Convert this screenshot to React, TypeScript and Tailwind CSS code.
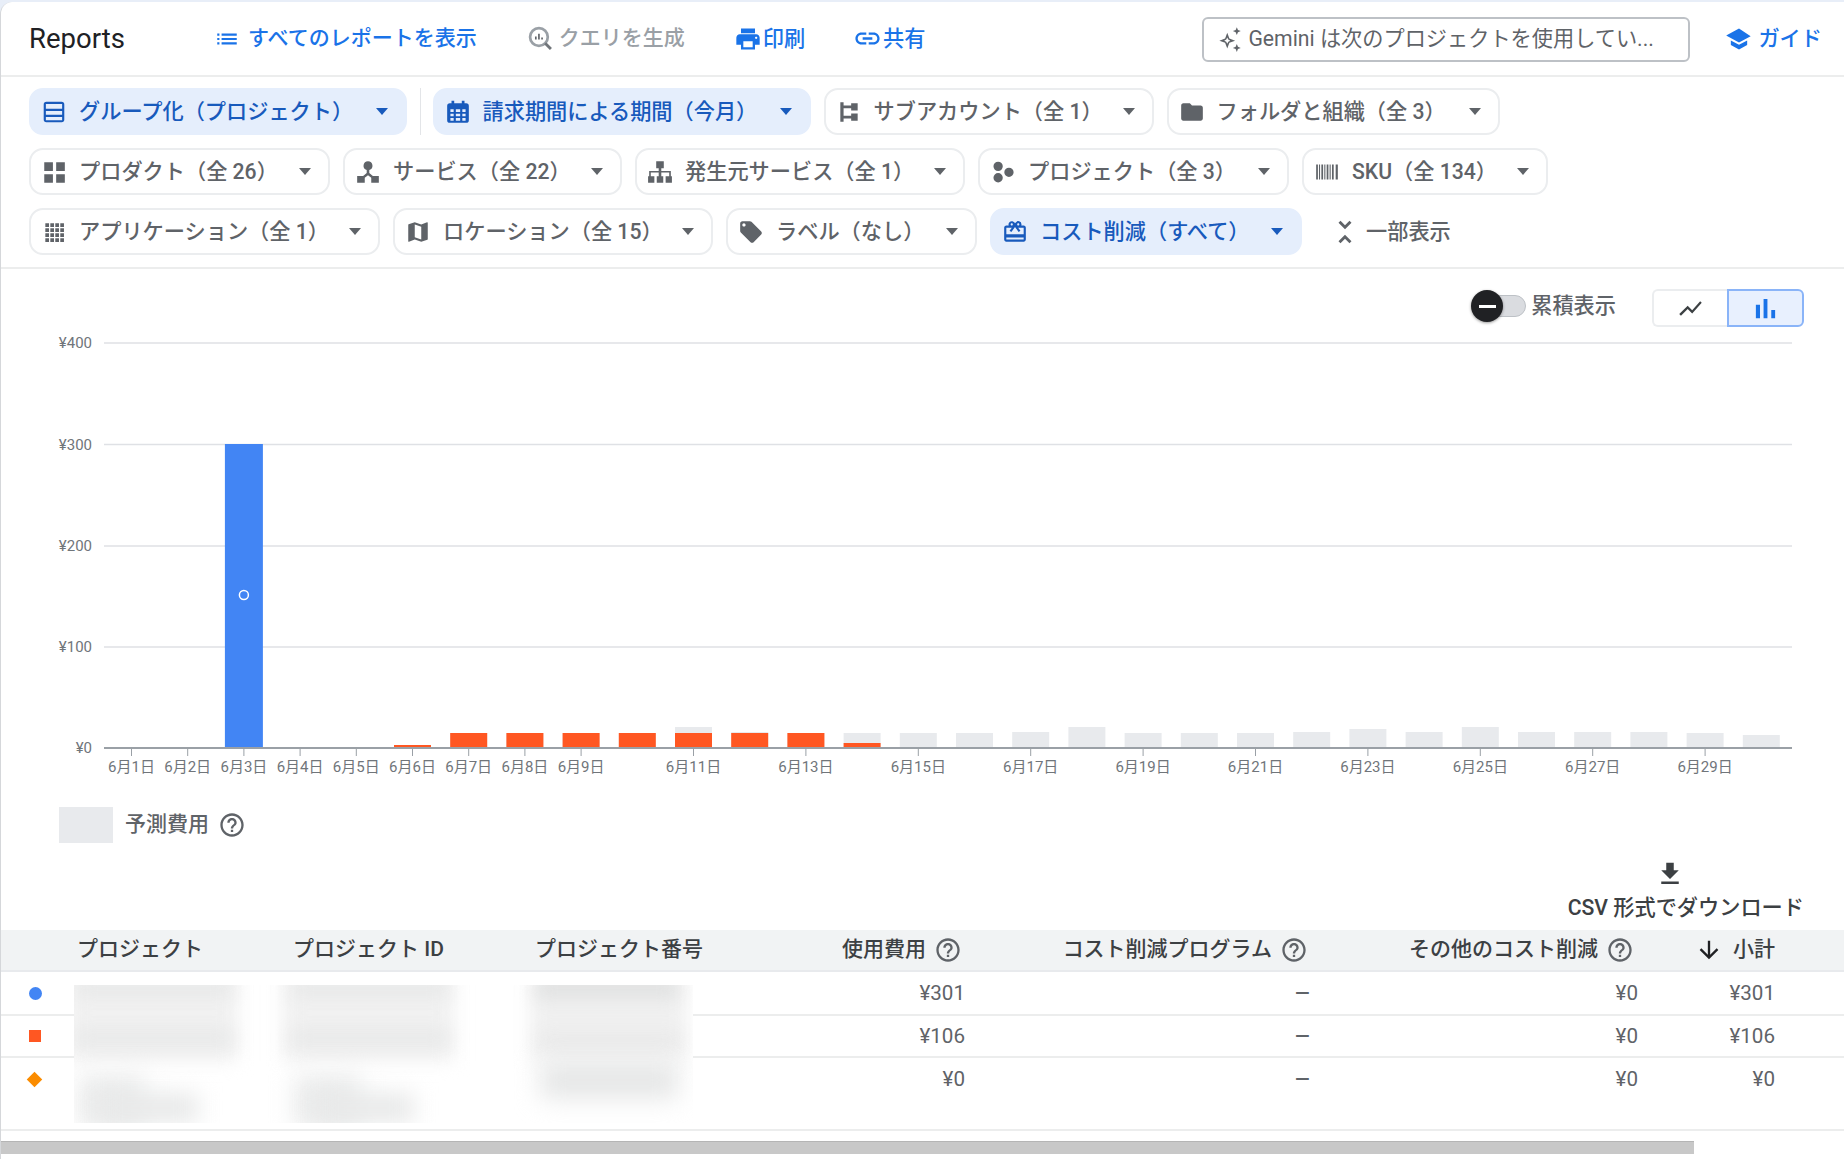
import type { ReactNode } from "react";

const paths = {
  list: "M3 13h2v-2H3v2zm0 4h2v-2H3v2zm0-8h2V7H3v2zm4 4h14v-2H7v2zm0 4h14v-2H7v2zM7 7v2h14V7H7z",
  print: "M19 8H5c-1.66 0-3 1.34-3 3v6h4v4h12v-4h4v-6c0-1.66-1.34-3-3-3zm-3 11H8v-5h8v5zm3-7c-.55 0-1-.45-1-1s.45-1 1-1 1 .45 1 1-.45 1-1 1zm-1-9H6v4h12V3z",
  link: "M3.9 12c0-1.71 1.39-3.1 3.1-3.1h4V7H7c-2.76 0-5 2.24-5 5s2.24 5 5 5h4v-1.9H7c-1.71 0-3.1-1.39-3.1-3.1zM8 13h8v-2H8v2zm9-6h-4v1.9h4c1.71 0 3.1 1.39 3.1 3.1s-1.39 3.1-3.1 3.1h-4V17h4c2.76 0 5-2.24 5-5s-2.24-5-5-5z",
  school: "M5 13.18v4L12 21l7-3.82v-4L12 17l-7-3.82zM12 3L1 9l11 6 10-5.45L12 3z",
  folder: "M10 4H4c-1.1 0-1.99.9-1.99 2L2 18c0 1.1.9 2 2 2h16c1.1 0 2-.9 2-2V8c0-1.1-.9-2-2-2h-8l-2-2z",
  map: "M20.5 3l-.16.03L15 5.1 9 3 3.36 4.9c-.21.07-.36.25-.36.48V20.5c0 .28.22.5.5.5l.16-.03L9 18.9l6 2.1 5.64-1.9c.21-.07.36-.25.36-.48V3.5c0-.28-.22-.5-.5-.5zM15 19l-6-2.11V5l6 2.11V19z",
  tag: "M21.41 11.58l-9-9C12.05 2.22 11.55 2 11 2H4c-1.1 0-2 .9-2 2v7c0 .55.22 1.05.59 1.42l9 9c.36.36.86.58 1.41.58.55 0 1.05-.22 1.41-.59l7-7c.37-.36.59-.86.59-1.41 0-.55-.23-1.06-.59-1.42zM5.5 7C4.67 7 4 6.33 4 5.5S4.67 4 5.5 4 7 4.67 7 5.5 6.33 7 5.5 7z",
  gift: "M20 6h-2.18c.11-.31.18-.65.18-1a2.996 2.996 0 0 0-5.5-1.65l-.5.67-.5-.68C10.96 2.54 10.05 2 9 2 7.34 2 6 3.34 6 5c0 .35.07.69.18 1H4c-1.11 0-1.99.89-1.99 2L2 19c0 1.11.89 2 2 2h16c1.11 0 2-.89 2-2V8c0-1.11-.89-2-2-2zm-5-2c.55 0 1 .45 1 1s-.45 1-1 1-1-.45-1-1 .45-1 1-1zM9 4c.55 0 1 .45 1 1s-.45 1-1 1-1-.45-1-1 .45-1 1-1zm11 15H4v-2h16v2zm0-5H4V8h5.08L7 10.83 8.62 12 11 8.76l1-1.36 1 1.36L15.38 12 17 10.83 14.92 8H20v6z",
  unfold: "M7.41 18.59L8.83 20 12 16.83 15.17 20l1.41-1.41L12 14l-4.59 4.59zm9.18-13.18L15.17 4 12 7.17 8.83 4 7.41 5.41 12 10l4.59-4.59z",
  line: "M3.5 18.49l6-6.01 4 4L22 6.92l-1.41-1.41-7.09 7.97-4-4L2 16.99z",
  bars: "M5 9.2h3V19H5zM10.6 5h2.8v14h-2.8zm5.6 8H19v6h-2.8z",
  help: "M11 18h2v-2h-2v2zm1-16C6.48 2 2 6.48 2 12s4.48 10 10 10 10-4.48 10-10S17.52 2 12 2zm0 18c-4.41 0-8-3.59-8-8s3.59-8 8-8 8 3.59 8 8-3.59 8-8 8zm0-14c-2.21 0-4 1.79-4 4h2c0-1.1.9-2 2-2s2 .9 2 2c0 2-3 1.75-3 5h2c0-2.25 3-2.5 3-5 0-2.21-1.79-4-4-4z",
  down: "M20 12l-1.41-1.41L13 16.17V4h-2v12.17l-5.58-5.59L4 12l8 8 8-8z",
  download: "M19 9h-4V3H9v6H5l7 7 7-7zM5 18v2h14v-2H5z",
  products: "M3 3h8v8H3zM14 3h8v8h-8zM3 14h8v8H3zM14 14h8v8h-8z",
  apps: "M4 4h3.4v3.4H4zM8.6 4H12v3.4H8.6zM13.2 4h3.4v3.4h-3.4zM17.8 4h3.4v3.4h-3.4zM4 8.6h3.4V12H4zM8.6 8.6H12V12H8.6zM13.2 8.6h3.4V12h-3.4zM17.8 8.6h3.4V12h-3.4zM4 13.2h3.4v3.4H4zM8.6 13.2H12v3.4H8.6zM13.2 13.2h3.4v3.4h-3.4zM17.8 13.2h3.4v3.4h-3.4zM4 17.8h3.4v3.4H4zM8.6 17.8H12v3.4H8.6zM13.2 17.8h3.4v3.4h-3.4zM17.8 17.8h3.4v3.4h-3.4z",
  service: "M12 2a4.2 4.2 0 0 1 1.2 8.2V13l3.3 2.6H22V22h-7v-4.8L12 15l-3 2.2V22H2v-6.4h5.5l3.3-2.6v-2.8A4.2 4.2 0 0 1 12 2z",
  source: "M8.5 2h7v6.5h-2.3V11H22v5h-1.5v-3.5h-7.3V16H15v6H9v-6h1.8v-3.5H3.5V16H2v-5h8.8V8.5H8.5zM1 16h5.8v6H1zM17.2 16H23v6h-5.8z",
  project: "M7.5 2.5a4.3 4.3 0 1 1 0 8.6 4.3 4.3 0 0 1 0-8.6zM17.5 8a4.3 4.3 0 1 1 0 8.6 4.3 4.3 0 0 1 0-8.6zM7.5 13a4.3 4.3 0 1 1 0 8.6 4.3 4.3 0 0 1 0-8.6z",
  sku: "M2 5h1.6v14H2zM4.6 5h1v14h-1zM6.8 5h1.6v14H6.8zM9.5 5h1v14h-1zM11.7 5h1.6v14h-1.6zM14.4 5h1v14h-1zM16.6 5h1.6v14h-1.6zM20 5h2v14h-2z",
  account: "M4 3h3v18H4zM7 6h7v2.6H7zM7 15.4h7V18H7zM14 4h6v6.6h-6zM14 13.4h6V20h-6z",
  table: "M5 2.5h14A2.5 2.5 0 0 1 21.5 5v14a2.5 2.5 0 0 1-2.5 2.5H5A2.5 2.5 0 0 1 2.5 19V5A2.5 2.5 0 0 1 5 2.5zm-.5 2V9h15V4.500zm0 6.500v3.500h15V11zm0 5.500v3h15v-3z",
  calendar: "M6 1.500h2.500V4h7V1.500H18V4h1.500A2.500 2.500 0 0 1 22 6.500v13a2.500 2.500 0 0 1-2.500 2.500h-15A2.500 2.500 0 0 1 2 19.500v-13A2.500 2.500 0 0 1 4.500 4H6zM5 9.500v2.500h3V9.500zm5 0v2.500h4V9.500zm6 0v2.500h3V9.500zM5 13.500V16h3v-2.500zm5 0V16h4v-2.500zm6 0V16h3v-2.500zM5 17.500V20h3v-2.500zm5 0V20h4v-2.500zm6 0V20h3v-2.500z",
  spark: "M10 6l1.900 5.100L17 13l-5.100 1.900L10 20l-1.900-5.100L3 13l5.100-1.900zm0 4.300l-.9 1.800-1.800.9 1.800.9.900 1.800.9-1.800 1.800-.9-1.800-.9zM18.500 1l1 2.500 2.500 1-2.500 1-1 2.500-1-2.500-2.500-1 2.500-1zM18.500 16l1 2.500 2.500 1-2.500 1-1 2.500-1-2.500-2.500-1 2.500-1z",
};

function Icon({ d, className }: Readonly<{ d: string; className: string }>) {
  return (
    <svg viewBox="0 0 24 24" fill="currentColor" className={`shrink-0 ${className}`}>
      <path d={d} fillRule="evenodd" />
    </svg>
  );
}

function QueryIcon() {
  return (
    <svg viewBox="0 0 24 24" className="h-[25px] w-[25px] shrink-0 text-[#9aa0a6]" fill="none" stroke="currentColor">
      <circle cx="10.5" cy="10.5" r="8.500" strokeWidth="2.6" />
      <path d="M16.500 16.500l5.500 5.500" strokeWidth="2.800" stroke="#70757a" />
      <path d="M7.500 10v3M10.500 7.500v5.500M13.500 11v2" strokeWidth="1.600" stroke="#5f6368" />
    </svg>
  );
}

function Chip({
  d,
  label,
  width,
  active = false,
}: Readonly<{ d: string; label: string; width: string; active?: boolean }>) {
  return (
    <div
      className={`flex h-[47px] items-center rounded-[14px] border-2 pl-[10px] pr-[17px] text-[21.2px] font-medium ${width} ${
        active ? "border-[#e5eefc] bg-[#e5eefc] text-[#185abc]" : "border-[#ebedef] bg-white text-[#5f6368]"
      }`}
    >
      <Icon d={d} className="h-[26px] w-[26px]" />
      <span className="ml-[12px] whitespace-nowrap">{label}</span>
      <span
        className={`ml-auto h-0 w-0 border-x-[6px] border-t-[7px] border-x-transparent ${
          active ? "border-t-[#185abc]" : "border-t-[#5f6368]"
        }`}
      />
    </div>
  );
}

function HeaderLink({ icon, label, className }: Readonly<{ icon: ReactNode; label: string; className: string }>) {
  return (
    <div className={`flex items-center gap-[1px] whitespace-nowrap text-[21.2px] font-medium text-[#1a73e8] ${className}`}>
      {icon}
      <span>{label}</span>
    </div>
  );
}

function Header() {
  return (
    <header className="flex h-[75px] items-center border-b-2 border-[#eceded] pl-[28px] pr-[22px] pt-[1px]">
      <h1 className="w-[185px] text-[27.5px] text-[#202124]">Reports</h1>
      <div className="flex items-center gap-[46px]">
        <div className="flex items-center gap-[8px] whitespace-nowrap text-[21px] font-medium text-[#1a73e8]">
          <Icon d={paths.list} className="h-[26px] w-[26px]" />
          <span>すべてのレポートを表示</span>
        </div>
        <div className="ml-[5px] flex items-center gap-[6px] whitespace-nowrap text-[21px] font-medium text-[#9aa0a6]">
          <QueryIcon />
          <span>クエリを生成</span>
        </div>
        <HeaderLink className="ml-[3px]" icon={<Icon d={paths.print} className="h-[28px] w-[28px]" />} label="印刷" />
        <HeaderLink className="ml-[2px]" icon={<Icon d={paths.link} className="h-[29px] w-[29px]" />} label="共有" />
      </div>
      <div className="ml-auto flex h-[45px] w-[488px] items-center rounded-[6px] border-2 border-[#bdc1c6] pl-[12px] text-[21.2px] text-[#5f6368]">
        <Icon d={paths.spark} className="h-[27px] w-[27px]" />
        <span className="ml-[5px] whitespace-nowrap">Gemini は次のプロジェクトを使用してい...</span>
      </div>
      <div className="ml-[35px] flex items-center gap-[5px] whitespace-nowrap text-[21.2px] font-medium text-[#1a73e8]">
        <Icon d={paths.school} className="h-[28px] w-[28px]" />
        <span>ガイド</span>
      </div>
    </header>
  );
}

function Filters() {
  return (
    <section className="flex flex-col gap-[13px] border-b-2 border-[#eceded] pb-[12px] pl-[28px] pt-[11px]">
      <div className="flex items-center gap-[13px]">
        <Chip d={paths.table} label="グループ化（プロジェクト）" width="w-[378px]" active />
        <div className="-mr-[1.5px] h-[47px] w-px bg-[#e3e5e8]" />
        <Chip d={paths.calendar} label="請求期間による期間（今月）" width="w-[378px]" active />
        <Chip d={paths.account} label="サブアカウント（全 1）" width="w-[330px]" />
        <Chip d={paths.folder} label="フォルダと組織（全 3）" width="w-[333px]" />
      </div>
      <div className="flex items-center gap-[13px]">
        <Chip d={paths.products} label="プロダクト（全 26）" width="w-[301px]" />
        <Chip d={paths.service} label="サービス（全 22）" width="w-[279px]" />
        <Chip d={paths.source} label="発生元サービス（全 1）" width="w-[330px]" />
        <Chip d={paths.project} label="プロジェクト（全 3）" width="w-[311px]" />
        <Chip d={paths.sku} label="SKU（全 134）" width="w-[246px]" />
      </div>
      <div className="flex items-center gap-[13px]">
        <Chip d={paths.apps} label="アプリケーション（全 1）" width="w-[351px]" />
        <Chip d={paths.map} label="ロケーション（全 15）" width="w-[320px]" />
        <Chip d={paths.tag} label="ラベル（なし）" width="w-[251px]" />
        <Chip d={paths.gift} label="コスト削減（すべて）" width="w-[312px]" active />
        <div className="ml-[13px] flex items-center gap-[4px] text-[21.2px] font-medium text-[#5f6368]">
          <Icon d={paths.unfold} className="h-[34px] w-[34px]" />
          <span>一部表示</span>
        </div>
      </div>
    </section>
  );
}

function ChartControls() {
  return (
    <div className="flex items-center justify-end pr-[40px] pt-[20px]">
      <div className="relative mb-[4px] h-[32px] w-[55px]">
        <div className="absolute right-0 top-[5px] h-[22px] w-[40px] rounded-full border border-[#bdc1c6] bg-[#dadce0]" />
        <div className="absolute left-0 top-0 flex h-[32px] w-[32px] items-center justify-center rounded-full bg-[#202124] shadow-[0_1px_3px_rgba(0,0,0,0.4)]">
          <div className="h-[3px] w-[17px] bg-white" />
        </div>
      </div>
      <span className="mb-[4px] ml-[5px] mr-[36px] text-[21.2px] font-medium text-[#5f6368]">累積表示</span>
      <div className="flex h-[38px] w-[152px]">
        <div className="flex flex-1 items-center justify-center rounded-l-[6px] border-2 border-r-0 border-[#ebedef] bg-white text-[#3c4043]">
          <Icon d={paths.line} className="h-[27px] w-[27px]" />
        </div>
        <div className="flex w-[77px] items-center justify-center rounded-r-[6px] border-2 border-[#8ab4f8] bg-[#e8f0fe] text-[#1a73e8]">
          <Icon d={paths.bars} className="h-[33px] w-[33px]" />
        </div>
      </div>
    </div>
  );
}

// bar heights in px, one entry per day of June
const forecast = [0, 0, 0, 0, 0, 0, 15, 15, 15, 15, 21, 16, 15, 15, 15, 15, 16, 21, 15, 15, 15, 16, 19, 16, 21, 16, 16, 16, 15, 13];
const actual = [0, 0, 0, 0, 0, 3, 15, 15, 15, 15, 15, 15, 15, 5];
const tickDays = [1, 2, 3, 4, 5, 6, 7, 8, 9, 11, 13, 15, 17, 19, 21, 23, 25, 27, 29];
const yTicks = [
  { label: "¥400", y: 16 },
  { label: "¥300", y: 117.5 },
  { label: "¥200", y: 219 },
  { label: "¥100", y: 320 },
];

const barCenter = (day: number) => 130.5 + 56.2 * (day - 1);

function Chart() {
  const base = 421;
  return (
    <svg viewBox="0 0 1844 460" className="block h-[460px] w-[1844px]">
      {yTicks.map((t) => (
        <g key={t.label}>
          <line x1="103" x2="1791" y1={t.y} y2={t.y} stroke="#dfe1e5" strokeWidth="1.5" />
          <text x="91" y={t.y + 5} textAnchor="end" className="fill-[#70757a] text-[15px]">
            {t.label}
          </text>
        </g>
      ))}
      <text x="91" y={base + 5} textAnchor="end" className="fill-[#70757a] text-[15px]">
        ¥0
      </text>
      {forecast.map((h, i) => (
        <rect key={`f${i + 1}`} x={barCenter(i + 1) - 18.5} y={base - h} width="37" height={h} fill="#e8eaed" />
      ))}
      {actual.map((h, i) => (
        <rect key={`a${i + 1}`} x={barCenter(i + 1) - 18.5} y={base - h} width="37" height={h} fill="#ff5722" />
      ))}
      <rect x={barCenter(3) - 19} y={base - 304} width="38" height="304" fill="#4285f4" />
      <circle cx={barCenter(3)} cy="268" r="4.500" fill="#4285f4" stroke="#fff" strokeWidth="1.500" />
      <line x1="103" x2="1791" y1={base} y2={base} stroke="#9aa0a6" strokeWidth="2" />
      {tickDays.map((day) => (
        <g key={day}>
          <line x1={barCenter(day)} x2={barCenter(day)} y1={base} y2={base + 8} stroke="#9aa0a6" strokeWidth="1" />
          <text x={barCenter(day)} y={base + 24} textAnchor="middle" className="fill-[#70757a] text-[15px]">
            {`6月${day}日`}
          </text>
        </g>
      ))}
    </svg>
  );
}

function Help({ className = "" }: Readonly<{ className?: string }>) {
  return <Icon d={paths.help} className={`h-[28px] w-[28px] text-[#5f6368] ${className}`} />;
}

const rows = [
  {
    cost: "¥301",
    total: "¥301",
    mark: "h-[13px] w-[13px] rounded-full bg-[#4285f4]",
    height: "h-[44px]",
    line: "h-[42px] leading-[42px]",
  },
  {
    cost: "¥106",
    total: "¥106",
    mark: "h-[12px] w-[12px] bg-[#ff5722]",
    height: "h-[42px]",
    line: "h-[40px] leading-[40px]",
  },
  {
    cost: "¥0",
    total: "¥0",
    mark: "h-[11px] w-[11px] rotate-45 bg-[#fb8c00]",
    height: "h-[73px]",
    line: "h-[42px] leading-[42px]",
  },
];

const tableCols = "grid grid-cols-[76px_216px_242px_430px_346px_327px_137px_1fr]";

function BlurColumn({ className }: Readonly<{ className: string }>) {
  return (
    <div className={`absolute top-0 h-[138px] w-[180px] ${className}`}>
      <div className="absolute -left-[8px] -top-[10px] h-[86px] w-[172px] bg-[#f1f1f1] blur-[9px]" />
      <div className="absolute left-[2px] -top-[6px] h-[16px] w-[156px] bg-[#e6e7e7] blur-[9px]" />
      <div className="absolute left-[2px] top-[46px] h-[14px] w-[156px] bg-[#e6e7e7] blur-[9px]" />
      <div className="absolute left-[4px] top-[90px] h-[54px] w-[66px] bg-[#ebecec] blur-[12px]" />
      <div className="absolute left-[24px] top-[108px] h-[30px] w-[100px] bg-[#e8e9e9] blur-[11px]" />
    </div>
  );
}

function Table() {
  return (
    <section className="relative mt-[8px]">
      <div className={`${tableCols} h-[42px] items-center border-b-2 border-[#e8eaed] bg-[#f1f3f4] text-[21px] font-medium text-[#3c4043]`}>
        <span />
        <span>プロジェクト</span>
        <span>プロジェクト ID</span>
        <span className="flex items-center justify-between pr-[3px]">
          プロジェクト番号
          <span className="flex items-center gap-[8px]">
            使用費用
            <Help />
          </span>
        </span>
        <span className="flex items-center justify-end gap-[8px] pr-[3px]">
          コスト削減プログラム
          <Help />
        </span>
        <span className="flex items-center justify-end gap-[8px] pr-[4px]">
          その他のコスト削減
          <Help />
        </span>
        <span className="flex items-center justify-end gap-[10px]">
          <Icon d={paths.down} className="h-[28px] w-[28px] text-[#202124]" />
          小計
        </span>
      </div>
      {rows.map((row) => (
        <div key={row.cost} className={`${tableCols} ${row.height} border-b-2 border-[#eceded] text-[20.6px] text-[#5f6368]`}>
          <div className={`flex items-center pl-[28px] ${row.line}`}>
            <span className={row.mark} />
          </div>
          <span />
          <span />
          <span className={`text-right ${row.line}`}>{row.cost}</span>
          <span className={`text-right text-[26px] ${row.line}`}>–</span>
          <span className={`text-right ${row.line}`}>¥0</span>
          <span className={`text-right ${row.line}`}>{row.total}</span>
          <span />
        </div>
      ))}
      <div className="absolute left-[73px] top-[55px] h-[138px] w-[619px] overflow-hidden bg-white">
        <BlurColumn className="left-0" />
        <BlurColumn className="left-[216px]" />
        <div className="absolute left-[456px] -top-[10px] h-[86px] w-[156px] bg-[#f0f0f0] blur-[10px]" />
        <div className="absolute left-[462px] -top-[8px] h-[20px] w-[142px] bg-[#dfe0e0] blur-[9px]" />
        <div className="absolute left-[466px] top-[48px] h-[12px] w-[140px] bg-[#e9e9e9] blur-[8px]" />
        <div className="absolute left-[466px] top-[76px] h-[38px] w-[138px] bg-[#e6e7e7] blur-[12px]" />
      </div>
    </section>
  );
}

export default function App() {
  return (
    <div className="h-[1159px] w-full overflow-hidden bg-[#e8eef8] pt-[2px] font-['Roboto','Noto_Sans_CJK_JP',sans-serif]">
      <div className="h-full rounded-tl-[12px] border-l border-[#d5d7da] bg-white">
        <Header />
        <Filters />
        <ChartControls />
        <Chart />
        <div className="mt-[20px] flex items-center pl-[58px]">
          <div className="h-[36px] w-[54px] bg-[#e8eaed]" />
          <span className="ml-[12px] text-[21px] font-medium text-[#5f6368]">予測費用</span>
          <Help className="ml-[9px]" />
        </div>
        <div className="mt-[16px] flex flex-col items-end pr-[40px]">
          <Icon d={paths.download} className="mr-[119px] h-[30px] w-[30px] text-[#3c4043]" />
          <span className="mt-[5px] text-[21.2px] font-medium leading-[28px] text-[#3c4043]">CSV 形式でダウンロード</span>
        </div>
        <Table />
        <div className="mt-[10px] h-[13px] w-[1693px] border-t border-[#b5b5b5] bg-[#c8c8c8]" />
      </div>
    </div>
  );
}
